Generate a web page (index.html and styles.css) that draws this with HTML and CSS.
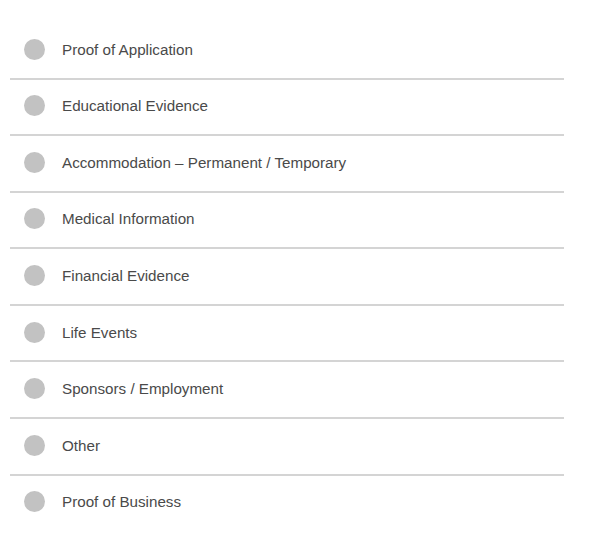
FILE: index.html
```html
<!DOCTYPE html>
<html lang="en">
<head>
  <meta charset="UTF-8" />
  <meta name="viewport" content="width=device-width, initial-scale=1.0" />
  <title>Evidence Categories</title>
  <link rel="stylesheet" href="styles.css">
</head>
<body>
  <ul class="evidence-list">
    <li class="evidence-item"><span class="dot"></span>Proof of Application</li>
    <li class="evidence-item"><span class="dot"></span>Educational Evidence</li>
    <li class="evidence-item"><span class="dot"></span>Accommodation – Permanent / Temporary</li>
    <li class="evidence-item"><span class="dot"></span>Medical Information</li>
    <li class="evidence-item"><span class="dot"></span>Financial Evidence</li>
    <li class="evidence-item"><span class="dot"></span>Life Events</li>
    <li class="evidence-item"><span class="dot"></span>Sponsors / Employment</li>
    <li class="evidence-item"><span class="dot"></span>Other</li>
    <li class="evidence-item last"><span class="dot"></span>Proof of Business</li>
  </ul>
</body>
</html>
```

FILE: styles.css
```css
body {
  margin: 0;
  background: #fff;
  font-family: "Liberation Sans", Arial, sans-serif;
  color: #4a4a4a;
}

.evidence-list {
  list-style: none;
  margin: 0 0 0 10px;
  padding: 23px 0 0;
  width: 554px;
}

.evidence-item {
  box-sizing: border-box;
  height: 56.57px;
  display: flex;
  align-items: center;
  padding-left: 14px;
  padding-bottom: 2px;
  border-bottom: 2px solid #d4d4d4;
  font-size: 15.2px;
}

.evidence-item.last {
  border-bottom-color: transparent;
}

.dot {
  width: 21px;
  height: 21px;
  border-radius: 50%;
  background: #c2c2c2;
  margin-right: 17px;
  flex-shrink: 0;
}
```
